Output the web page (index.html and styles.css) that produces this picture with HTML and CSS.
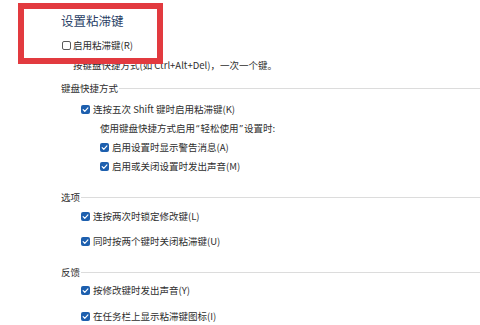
FILE: index.html
```html
<!DOCTYPE html>
<html lang="zh-CN">
<head>
<meta charset="utf-8">
<link rel="stylesheet" href="styles.css">
</head>
<body>
<div class="page">
  <div class="title">设置粘滞键</div>
  <div class="row top-cb"><span class="cb"></span><span>启用粘滞键(R)</span></div>
  <div class="row desc">按键盘快捷方式(如 Ctrl+Alt+Del)，一次一个键。</div>

  <div class="row hdr sp-desc">键盘快捷方式</div>
  <div class="row item sp-5"><span class="cb on"><svg viewBox="0 0 10 10"><path d="M2.4 5.2 L4.2 7 L7.7 3.2"/></svg></span><span>连按五次 Shift 键时启用粘滞键(K)</span></div>
  <div class="row sub note sp-3">使用键盘快捷方式启用<span class="q">“</span>轻松使用<span class="q">”</span>设置时:</div>
  <div class="row sub sp-3"><span class="cb on"><svg viewBox="0 0 10 10"><path d="M2.4 5.2 L4.2 7 L7.7 3.2"/></svg></span><span>启用设置时显示警告消息(A)</span></div>
  <div class="row sub sp-3"><span class="cb on"><svg viewBox="0 0 10 10"><path d="M2.4 5.2 L4.2 7 L7.7 3.2"/></svg></span><span>启用或关闭设置时发出声音(M)</span></div>

  <div class="row hdr sp-15">选项</div>
  <div class="row item sp-3"><span class="cb on"><svg viewBox="0 0 10 10"><path d="M2.4 5.2 L4.2 7 L7.7 3.2"/></svg></span><span>连按两次时锁定修改键(L)</span></div>
  <div class="row item sp-9"><span class="cb on"><svg viewBox="0 0 10 10"><path d="M2.4 5.2 L4.2 7 L7.7 3.2"/></svg></span><span>同时按两个键时关闭粘滞键(U)</span></div>

  <div class="row hdr sp-15">反馈</div>
  <div class="row item sp-2"><span class="cb on"><svg viewBox="0 0 10 10"><path d="M2.4 5.2 L4.2 7 L7.7 3.2"/></svg></span><span>按修改键时发出声音(Y)</span></div>
  <div class="row item sp-10"><span class="cb on"><svg viewBox="0 0 10 10"><path d="M2.4 5.2 L4.2 7 L7.7 3.2"/></svg></span><span>在任务栏上显示粘滞键图标(I)</span></div>

  <div class="highlight"></div>
</div>
</body>
</html>
```

FILE: styles.css
```css
html, body {
  margin: 0;
  padding: 0;
  background: #ffffff;
}
body {
  width: 480px;
  height: 325px;
  overflow: hidden;
  font-family: "Noto Sans CJK SC", "Noto Sans", sans-serif;
  font-size: 9.5px;
  color: #2e2e2e;
}
.page {
  position: relative;
  padding: 11px 0 0 61px;
}
.title {
  height: 20px;
  line-height: 20px;
  font-size: 12.5px;
  color: #2a3f66;
}
.row {
  height: 16px;
  display: flex;
  align-items: center;
  white-space: nowrap;
}
.top-cb { margin-top: 6px; padding-left: 1px; gap: 2px; }
.desc { margin-top: 4px; padding-left: 12px; }
.sp-desc { margin-top: 7px; }
.sp-2 { margin-top: 2px; }
.sp-3 { margin-top: 3px; }
.sp-5 { margin-top: 5px; }
.sp-9 { margin-top: 9px; }
.sp-10 { margin-top: 10px; }
.sp-15 { margin-top: 15px; }
.hdr::after {
  content: "";
  flex: 1;
  height: 1px;
  background: #dcdcdc;
  margin-left: 1px;
  margin-top: 1px;
}
.item { padding-left: 20px; gap: 3px; }
.sub { padding-left: 39px; gap: 3px; }
.note { padding-left: 39px; gap: 0; }
.q {
  font-family: "Noto Sans", sans-serif;
  padding: 0 1px;
}
.cb {
  width: 9px;
  height: 9px;
  box-sizing: border-box;
  border: 1px solid #5a5a5a;
  border-radius: 2px;
  background: #fff;
  flex: none;
  display: flex;
}
.cb.on {
  border: none;
  background: #1d5fae;
}
.cb svg {
  width: 9px;
  height: 9px;
}
.cb svg path {
  fill: none;
  stroke: #ffffff;
  stroke-width: 1.3;
  stroke-linecap: round;
  stroke-linejoin: round;
}
.highlight {
  position: absolute;
  left: 18px;
  top: 3px;
  width: 145px;
  height: 61px;
  box-sizing: border-box;
  border: 6px solid #e23a3f;
  z-index: 2;
}
```
